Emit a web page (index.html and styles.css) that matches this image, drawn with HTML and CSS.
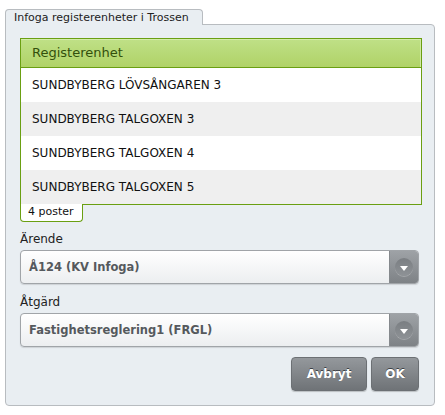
FILE: index.html
```html
<!DOCTYPE html>
<html lang="sv">
<head>
  <meta charset="UTF-8" />
  <title>Infoga registerenheter i Trossen</title>
  <link rel="stylesheet" href="styles.css">
</head>
<body>
  <div class="dialog">
    <div class="tab">Infoga registerenheter i Trossen</div>
    <div class="panel">
      <div class="grid">
        <div class="grid-header">Registerenhet</div>
        <div class="row">SUNDBYBERG LÖVSÅNGAREN 3</div>
        <div class="row alt">SUNDBYBERG TALGOXEN 3</div>
        <div class="row">SUNDBYBERG TALGOXEN 4</div>
        <div class="row alt">SUNDBYBERG TALGOXEN 5</div>
      </div>
      <div class="grid-footer">4 poster</div>

      <label class="field-label">Ärende</label>
      <div class="select">
        <span class="select-text">Å124 (KV Infoga)</span>
        <span class="select-btn"><span class="knob"></span></span>
      </div>

      <label class="field-label second">Åtgärd</label>
      <div class="select">
        <span class="select-text">Fastighetsreglering1 (FRGL)</span>
        <span class="select-btn"><span class="knob"></span></span>
      </div>

      <div class="actions">
        <button class="btn btn-cancel">Avbryt</button>
        <button class="btn btn-ok">OK</button>
      </div>
    </div>
  </div>
</body>
</html>
```

FILE: styles.css
```css
body {
  margin: 0;
  background: #ffffff;
  font-family: "DejaVu Sans", Verdana, sans-serif;
  color: #111;
}
.dialog {
  width: 430px;
  padding: 9px 0 0 5px;
}
.tab {
  position: relative;
  z-index: 1;
  width: 198px;
  height: 16px;
  margin-bottom: -1px;
  padding-left: 8px;
  box-sizing: border-box;
  font-size: 11px;
  line-height: 15px;
  color: #222;
  white-space: nowrap;
  background: #e9eef2;
  border: 1px solid #b8bcc0;
  border-bottom: none;
  border-radius: 4px 4px 0 0;
}
.panel {
  background: #e9eef2;
  border: 1px solid #b8bcc0;
  border-radius: 0 4px 4px 4px;
  padding: 13px 15px 14px 14px;
}
.grid {
  border: 1px solid #6a9f12;
  margin-right: -3px;
  background: #fff;
}
.grid-header {
  height: 28px;
  line-height: 28px;
  padding-left: 11px;
  font-size: 13px;
  color: #33500c;
  background: linear-gradient(#bfe087, #b0d267);
  border-bottom: 1px solid #6a9f12;
  box-shadow: inset 0 1px 0 #d4ecaa, inset -1px 0 0 #d0e8a4;
}
.row {
  height: 34px;
  line-height: 34px;
  padding-left: 11px;
  font-size: 12px;
  color: #111;
}
.row.alt {
  background: #efefef;
}
.grid-footer {
  position: relative;
  margin-top: -1px;
  height: 18px;
  width: 63px;
  box-sizing: border-box;
  padding-left: 7px;
  line-height: 16px;
  font-size: 11px;
  color: #111;
  background: #fff;
  border: 1px solid #6a9f12;
  border-top: none;
  border-radius: 0 0 4px 4px;
}
.field-label {
  display: block;
  margin: 10px 0 4px;
  font-size: 12px;
  line-height: 14px;
  color: #222;
}
.field-label.second {
  margin-top: 11px;
}
.select {
  display: flex;
  height: 34px;
  box-sizing: border-box;
  border: 1px solid #a0a4a8;
  border-radius: 4px;
  background: linear-gradient(#ffffff, #eceef0);
  box-shadow: 0 1px 1px rgba(0, 0, 0, 0.12);
  overflow: hidden;
}
.select-text {
  flex: 1;
  padding-left: 8px;
  line-height: 32px;
  font-size: 11.5px;
  font-weight: bold;
  color: #55595d;
}
.select-btn {
  width: 28px;
  display: flex;
  align-items: center;
  justify-content: center;
  background: linear-gradient(#9ea2a6, #7e8286);
  border-left: 1px solid #85898d;
}
.knob {
  width: 18px;
  height: 18px;
  border-radius: 50%;
  background: linear-gradient(#7a7e82, #8e9296);
  box-shadow: 0 1px 0 rgba(255, 255, 255, 0.25);
  display: flex;
  align-items: center;
  justify-content: center;
}
.knob::after {
  content: "";
  width: 0;
  height: 0;
  margin-top: 2px;
  border-left: 4px solid transparent;
  border-right: 4px solid transparent;
  border-top: 5px solid #ffffff;
}
.actions {
  display: flex;
  justify-content: flex-end;
  gap: 4px;
  margin-top: 10px;
}
.btn {
  height: 34px;
  box-sizing: border-box;
  border: 1px solid #6c7074;
  border-radius: 4px;
  background: linear-gradient(#94989c, #6f7377);
  color: #fff;
  font-family: "DejaVu Sans", Verdana, sans-serif;
  font-size: 12px;
  font-weight: bold;
  text-shadow: 0 -1px 0 #3d4145;
  box-shadow: 0 1px 1px rgba(0, 0, 0, 0.2);
  cursor: pointer;
}
.btn-cancel {
  width: 76px;
}
.btn-ok {
  width: 48px;
}
```
